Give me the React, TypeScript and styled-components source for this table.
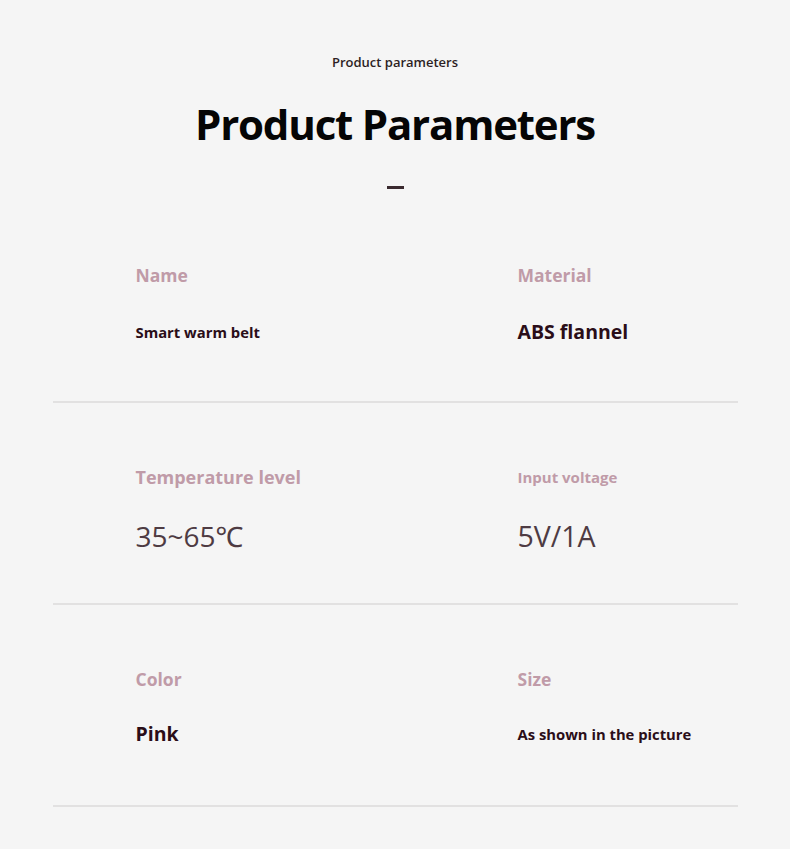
import React from "react";
import styled, { createGlobalStyle } from "styled-components";

const Global = createGlobalStyle`
  html, body { margin: 0; padding: 0; background: #f5f5f5; }
  body { font-family: "Open Sans", "Noto Sans", sans-serif; }
`;

const Page = styled.div`
  width: 790px;
  min-height: 849px;
  background: #f5f5f5;
  display: flex;
  flex-direction: column;
  align-items: center;
`;

const Kicker = styled.div`
  margin-top: 52px;
  font-size: 13px;
  line-height: 20px;
  font-weight: 600;
  color: #2d1f24;
`;

const Title = styled.h1`
  margin: 22px 0 0;
  font-size: 42px;
  line-height: 60px;
  font-weight: 700;
  letter-spacing: -1.2px;
  color: #050505;
`;

const Dash = styled.div`
  margin-top: 32px;
  width: 17px;
  height: 3px;
  background: #3a2a2f;
`;

const Table = styled.div`
  margin-top: 12px;
  width: 685px;
  display: flex;
  flex-direction: column;
`;

const Row = styled.div`
  height: 202px;
  box-sizing: border-box;
  border-bottom: 2px solid #e2e1e1;
  padding: 62px 0 0 83px;
  display: grid;
  grid-template-columns: 382px 1fr;
`;

const Cell = styled.div`
  display: flex;
  flex-direction: column;
`;

const Label = styled.div<{ $size: number }>`
  height: 24px;
  line-height: 24px;
  font-size: ${(p) => p.$size}px;
  font-weight: 700;
  color: #c09ba8;
  white-space: nowrap;
`;

const Value = styled.div<{ $size: number; $light?: boolean; $dy?: number }>`
  margin-top: ${(p) => 27 + (p.$dy ?? 0)}px;
  height: 36px;
  line-height: 36px;
  font-size: ${(p) => p.$size}px;
  font-weight: ${(p) => (p.$light ? 400 : 700)};
  color: ${(p) => (p.$light ? "#4e3b43" : "#2a0d18")};
  white-space: nowrap;
`;

type Item = { label: string; ls: number; value: string; vs: number; light?: boolean; dy?: number };

const rows: Item[][] = [
  [
    { label: "Name", ls: 17.5, value: "Smart warm belt", vs: 14.8 },
    { label: "Material", ls: 17.5, value: "ABS flannel", vs: 19.5 },
  ],
  [
    { label: "Temperature level", ls: 18, value: "35~65℃", vs: 28, light: true, dy: 2 },
    { label: "Input voltage", ls: 15, value: "5V/1A", vs: 28.5, light: true, dy: 2 },
  ],
  [
    { label: "Color", ls: 17.5, value: "Pink", vs: 19.5, dy: -2 },
    { label: "Size", ls: 17.5, value: "As shown in the picture", vs: 14.8, dy: -2 },
  ],
];

export default function App() {
  return (
    <Page>
      <Global />
      <Kicker>Product parameters</Kicker>
      <Title>Product Parameters</Title>
      <Dash />
      <Table>
        {rows.map((r, i) => (
          <Row key={i}>
            {r.map((it) => (
              <Cell key={it.label}>
                <Label $size={it.ls}>{it.label}</Label>
                <Value $size={it.vs} $light={it.light} $dy={it.dy}>
                  {it.value}
                </Value>
              </Cell>
            ))}
          </Row>
        ))}
      </Table>
    </Page>
  );
}
